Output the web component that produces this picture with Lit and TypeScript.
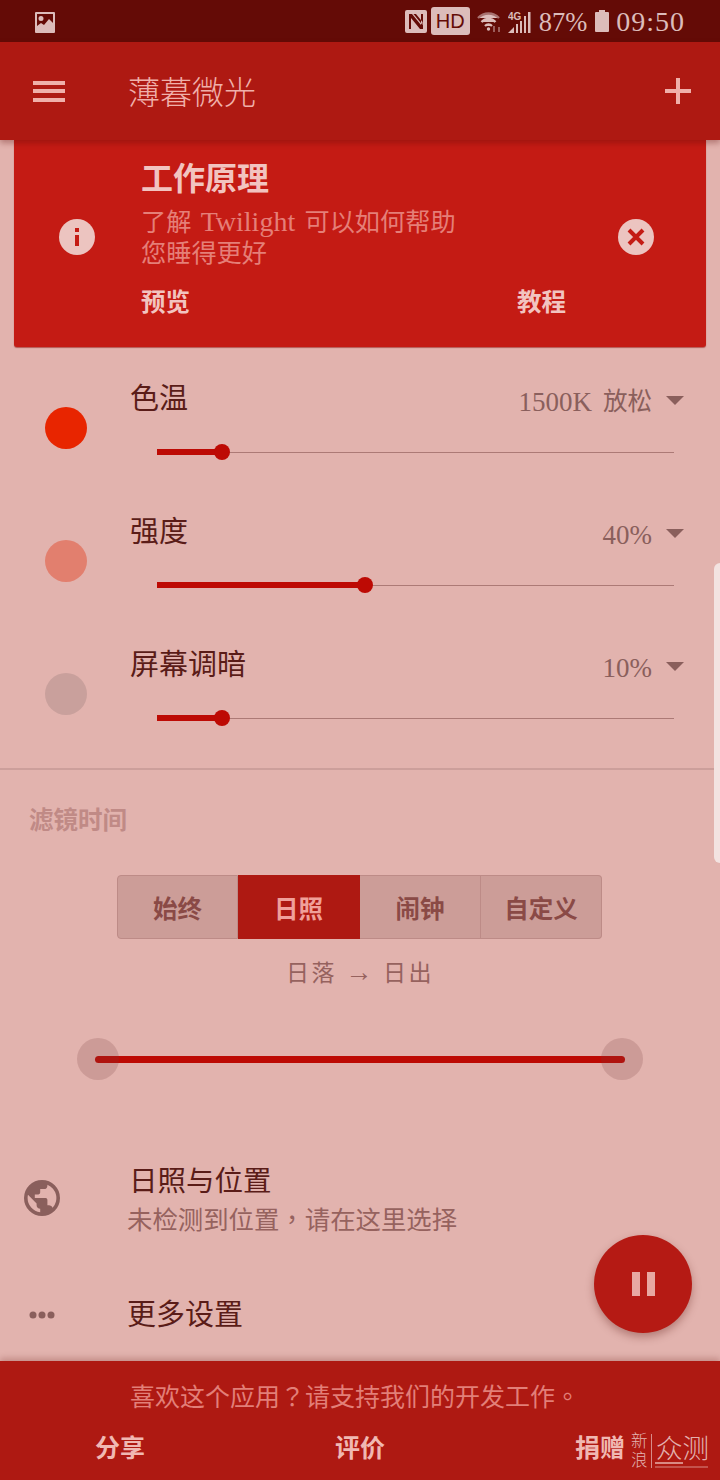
import { LitElement, css, html, svg } from 'lit';
import { customElement } from 'lit/decorators.js';

const sliders = [
  { label: '色温', value: '1500K', unit: '放松', dot: '#e82500', pct: 12.6 },
  { label: '强度', value: '40%', unit: '', dot: '#e27f6e', pct: 40.2 },
  { label: '屏幕调暗', value: '10%', unit: '', dot: '#c9a09c', pct: 12.6 },
];

const modes = ['始终', '日照', '闹钟', '自定义'];

// material "public" globe
const globe = svg`<path d="M12 2a10 10 0 1 0 0 20 10 10 0 0 0 0-20zm-1 17.930A8 8 0 0 1 4 12c0-.62.08-1.210.21-1.790L9 15v1c0 1.100.9 2 2 2v1.930zm6.900-2.540A2 2 0 0 0 16 16h-1v-3a1 1 0 0 0-1-1H8v-2h2a1 1 0 0 0 1-1V7h2a2 2 0 0 0 2-2v-.41a8 8 0 0 1 2.900 12.800z"/>`;

@customElement('app-root')
export class AppRoot extends LitElement {
  static styles = css`
    :host {
      display: flex;
      flex-direction: column;
      position: relative;
      width: 720px;
      height: 1480px;
      overflow: hidden;
      background: #e2b3ae;
      font-family: 'Liberation Serif', 'Noto Sans CJK SC', serif;
    }

    .status {
      height: 42px;
      flex-shrink: 0;
      display: flex;
      align-items: center;
      padding: 0 35px 0 34px;
      background: #640b06;
      color: #dcbcba;
    }
    .status .grow { flex: 1; }
    .status svg { display: block; fill: #dcbcba; }
    .pic { margin-top: 2px; }
    .hd {
      width: 39px;
      height: 28px;
      margin: 0 7px 0 4px;
      display: flex;
      align-items: center;
      justify-content: center;
      background: #dcbcba;
      border-radius: 3px;
      color: #640b06;
      font: 20px 'Liberation Sans', sans-serif;
    }
    .status .wifi { margin-right: 6px; margin-top: 1px; }
    .status .signal { margin-top: 1px; }
    .batt-text { font-size: 26.5px; margin: 2px 8px 0 8px; line-height: 40px; }
    .clock { font-size: 28px; margin: 2px 0 0 7px; letter-spacing: 1px; line-height: 40px; }

    .appbar {
      height: 98px;
      flex-shrink: 0;
      display: flex;
      align-items: center;
      padding: 0 29px 0 33px;
      background: #ae1912;
      box-shadow: 0 3px 6px rgba(90, 10, 5, 0.35);
      position: relative;
      z-index: 2;
    }
    .burger { width: 32px; height: 21px; display: flex; flex-direction: column; justify-content: space-between; }
    .burger i { display: block; height: 4px; background: #f0b0aa; }
    .appbar h1 {
      flex: 1;
      margin: -2px 0 0 63px;
      font-size: 32px;
      font-weight: 300;
      color: #f0b0aa;
    }

    .card {
      height: 207px;
      flex-shrink: 0;
      box-sizing: border-box;
      margin: 0 14px;
      padding: 20px 52px 0 45px;
      display: grid;
      grid-template-columns: 36px 1fr 36px;
      column-gap: 46px;
      background: #c41b14;
      border-radius: 0 0 3px 3px;
      box-shadow: 0 1px 1px rgba(150, 30, 25, 0.6);
    }
    .card .icon { align-self: start; margin-top: 59px; display: block; }
    .card h2 { margin: 0; font-size: 32px; line-height: 38px; font-weight: 700; color: #f2c4c0; }
    .card p { margin: 8px 0 0; font-size: 25.200px; line-height: 31px; color: #e57f78; white-space: nowrap; }
    .card p .latin { font-size: 28px; margin: 0 3px; }
    .card .actions {
      display: flex;
      justify-content: space-between;
      width: 425px;
      margin-top: 16px;
      font-size: 24.5px;
      line-height: 36px;
      font-weight: 700;
      color: #f2c4c0;
    }

    .sliders { padding-top: 20px; height: 423px; box-sizing: border-box; flex-shrink: 0; border-bottom: 2px solid #cc9f9b; }
    .row { height: 133px; display: grid; grid-template-columns: 130px 1fr; }
    .dot { width: 42px; height: 42px; border-radius: 50%; margin: 40px 0 0 45px; }
    .head {
      display: flex;
      justify-content: space-between;
      align-items: center;
      height: 60px;
      padding-right: 36px;
    }
    .head .label { margin-top: 3px; font-size: 29px; line-height: 40px; color: #5a1c18; }
    .head .val { display: flex; align-items: center; gap: 14px; margin-top: 9px; font-size: 27px; line-height: 36px; color: #8a5f5c; }
    .head .unit { font-size: 24.5px; margin-left: -3px; }
    .head .caret { width: 0; height: 0; margin-top: -3px; border-left: 9px solid transparent; border-right: 9px solid transparent; border-top: 9px solid #8a5f5c; }
    .track { display: flex; align-items: center; height: 20px; margin: 15px 46px 0 27px; }
    .track .on { height: 6px; background: #bd0a04; }
    .track .thumb { width: 16px; height: 16px; margin: 0 -4px 0 -8px; border-radius: 50%; background: #bd0a04; flex-shrink: 0; z-index: 1; }
    .track .off { flex: 1; height: 1px; background: #ac7a76; }

    .section { margin: 0; padding: 33px 0 0 29px; height: 70px; box-sizing: border-box; font-size: 24.5px; line-height: 36px; font-weight: 700; color: #c08a86; }

    .modes {
      display: grid;
      grid-template-columns: 121px 122px 121px 121px;
      width: 485px;
      height: 64px;
      margin: 35px 0 0 117px;
    }
    .mode {
      display: flex;
      align-items: center;
      justify-content: center;
      background: #cc9d98;
      border: 1px solid #bd8b87;
      border-left: 0;
      font-size: 24.5px;
      font-weight: 700;
      color: #8a4a46;
    }
    .mode:first-child { border-left: 1px solid #bd8b87; border-radius: 4px 0 0 4px; }
    .mode:last-child { border-radius: 0 4px 4px 0; }
    .mode.active { background: #ae1912; border-color: #ae1912; color: #f0a09a; }
    .range-label { margin-top: 17px; text-align: center; font-size: 23px; line-height: 36px; letter-spacing: 2.500px; color: #96625e; }
    .range-label .arrow { font-size: 27px; line-height: 0; }

    .range { position: relative; height: 42px; margin: 46px 77px 0 77px; display: flex; align-items: center; }
    .range .line { flex: 1; height: 7px; margin: 0 18px; border-radius: 4px; background: #bd0a04; }
    .range .knob { position: absolute; top: 0; width: 42px; height: 42px; border-radius: 50%; background: rgba(120, 60, 60, 0.2); }

    .list { flex: 1; position: relative; }
    .item { display: grid; grid-template-columns: 127px 1fr; align-items: center; }
    .item .ico { justify-self: start; margin-left: 24px; display: block; fill: #8a5f5c; }
    .item .title { font-size: 29px; line-height: 36px; color: #5a1c18; }
    .item .sub { margin-top: 2px; font-family: 'Liberation Serif', 'Noto Sans CJK TC', serif; font-size: 25.400px; line-height: 36px; color: #96625e; white-space: nowrap; }
    .loc { margin-top: 84px; }
    .loc .ico { align-self: start; margin-top: 16px; }
    .loc .title { padding-left: 2px; font-size: 28.5px; }
    .more { margin-top: 59px; height: 36px; }

    .bottom {
      height: 119px;
      flex-shrink: 0;
      box-sizing: border-box;
      padding-top: 17px;
      background: #ae1912;
      box-shadow: 0 -3px 6px rgba(90, 10, 5, 0.22);
      position: relative;
    }
    .bottom p { margin: 2px 0 0; padding-right: 10px; text-align: center; font-family: 'Liberation Serif', 'Noto Sans CJK TC', serif; font-size: 25px; line-height: 36px; color: #e27f78; }
    .bottom .links { display: grid; grid-template-columns: repeat(3, 240px); justify-items: center; margin-top: 15px; font-size: 25px; line-height: 36px; font-weight: 700; color: #f0b8b2; }

    .fab {
      position: absolute;
      left: 594px;
      top: 1235px;
      width: 98px;
      height: 98px;
      border-radius: 50%;
      background: #b51a14;
      box-shadow: 0 4px 8px rgba(90, 20, 15, 0.35);
      display: flex;
      align-items: center;
      justify-content: center;
      gap: 7px;
      z-index: 3;
    }
    .fab i { width: 8px; height: 24px; background: #e8a8a2; }

    .edge {
      position: absolute;
      left: 714px;
      top: 563px;
      width: 6px;
      height: 300px;
      border-radius: 6px 0 0 6px;
      background: #f3e3e1;
    }

    .mark { position: absolute; left: 631px; top: 1433px; height: 36px; display: flex; align-items: center; color: rgba(255, 255, 255, 0.68); }
    .mark .v { width: 18px; font-size: 16.500px; line-height: 19px; font-family: 'Liberation Sans', 'Noto Sans CJK SC', sans-serif; font-weight: 300; }
    .mark .sep { width: 1px; height: 34px; margin: 0 4px 0 2px; background: rgba(255, 255, 255, 0.5); }
    .mark .h { font-size: 26.5px; line-height: 28px; font-family: 'Noto Sans CJK SC', sans-serif; font-weight: 300; margin-top: -8px; }
    .stripes { position: absolute; left: 24px; bottom: 1px; width: 53px; height: 6px; }
  `;

  render() {
    return html`
      <div class="status">
        <svg class="pic" width="22" height="21" viewBox="0 0 22 21">
          <path fill-rule="evenodd" d="M2 0h18a1 1 0 0 1 1 1v19a1 1 0 0 1-1 1H2a1 1 0 0 1-1-1V1a1 1 0 0 1 1-1zM3 2v12l4-3 3 2 5-6 4 4V2zM7 4a2.500 2.500 0 1 1 0 5 2.500 2.500 0 0 1 0-5z"/>
        </svg>
        <span class="grow"></span>
        <svg width="22" height="23" viewBox="0 0 22 23">
          <path fill-rule="evenodd" d="M2 0h18a2 2 0 0 1 2 2v19a2 2 0 0 1-2 2H2a2 2 0 0 1-2-2V2a2 2 0 0 1 2-2zM4 4v15h2V8l9 11h3V4h-2v11L7 4zM8.500 4l9 11V12L11 4z"/>
        </svg>
        <span class="hd">HD</span>
        <svg class="wifi" width="25" height="21" viewBox="0 0 25 21" fill="none" stroke-width="2.400">
          <path d="M1 7c6-6 15-6 21 0" stroke="#a87270"/>
          <path d="M4.500 11c4-4 10-4 14 0" stroke="#dcbcba"/>
          <path d="M8 15c2-2 5-2 7 0" stroke="#dcbcba"/>
          <circle cx="11.500" cy="18" r="1.700" fill="#dcbcba" stroke="none"/>
          <path d="M17 21v-6m5 6v-5" stroke="#a87270" stroke-width="1.600"/>
        </svg>
        <svg class="signal" width="23" height="23" viewBox="0 0 23 23">
          <text x="0" y="9.500" font-family="Liberation Sans, sans-serif" font-size="10" font-weight="700">4G</text>
          <path d="M0 23l6-6v6zM8 14h2v9H8zM12 11h2v12h-2zM16 6h2v17h-2zM20 2h2.500v21H20z"/>
        </svg>
        <span class="batt-text">87%</span>
        <svg width="14" height="22" viewBox="0 0 14 22"><path d="M4 0h6v2h3a1 1 0 0 1 1 1v18a1 1 0 0 1-1 1H1a1 1 0 0 1-1-1V3a1 1 0 0 1 1-1h3z"/></svg>
        <span class="clock">09:50</span>
      </div>

      <header class="appbar">
        <div class="burger"><i></i><i></i><i></i></div>
        <h1>薄暮微光</h1>
        <svg width="26" height="26" viewBox="0 0 26 26" fill="#f0b0aa"><path d="M11 0h4v11h11v4H15v11h-4V15H0v-4h11z"/></svg>
      </header>

      <section class="card">
        <svg class="icon" width="36" height="36" viewBox="0 0 36 36">
          <circle cx="18" cy="18" r="18" fill="#ecc4c0"/>
          <rect x="16" y="16" width="4" height="11" fill="#c41b14"/>
          <rect x="16" y="9" width="4" height="4" fill="#c41b14"/>
        </svg>
        <div>
          <h2>工作原理</h2>
          <p>了解 <span class="latin">Twilight</span> 可以如何帮助<br />您睡得更好</p>
          <div class="actions"><span>预览</span><span>教程</span></div>
        </div>
        <svg class="icon" width="36" height="36" viewBox="0 0 36 36">
          <circle cx="18" cy="18" r="18" fill="#ecc4c0"/>
          <path d="M11 11l14 14M25 11L11 25" stroke="#c41b14" stroke-width="4" fill="none"/>
        </svg>
      </section>

      <section class="sliders">
        ${sliders.map(
          (s) => html`
            <div class="row">
              <div class="dot" style="background:${s.dot}"></div>
              <div>
                <div class="head">
                  <span class="label">${s.label}</span>
                  <span class="val">
                    <span>${s.value}</span>
                    ${s.unit ? html`<span class="unit">${s.unit}</span>` : ''}
                    <i class="caret"></i>
                  </span>
                </div>
                <div class="track">
                  <div class="on" style="width:${s.pct}%"></div>
                  <div class="thumb"></div>
                  <div class="off"></div>
                </div>
              </div>
            </div>
          `,
        )}
      </section>

      <h3 class="section">滤镜时间</h3>

      <div class="modes">
        ${modes.map((m) => html`<div class="mode ${m === '日照' ? 'active' : ''}">${m}</div>`)}
      </div>
      <div class="range-label">日落 <span class="arrow">→</span> 日出</div>

      <div class="range">
        <div class="line"></div>
        <div class="knob" style="left:0"></div>
        <div class="knob" style="right:0"></div>
      </div>

      <div class="list">
        <div class="item loc">
          <svg class="ico" width="36" height="36" viewBox="2 2 20 20">${globe}</svg>
          <div>
            <div class="title">日照与位置</div>
            <div class="sub">未检测到位置，请在这里选择</div>
          </div>
        </div>
        <div class="item more">
          <svg class="ico" width="36" height="12" viewBox="0 0 36 12">
            <circle cx="9" cy="6" r="3.500"/><circle cx="18" cy="6" r="3.500"/><circle cx="27" cy="6" r="3.500"/>
          </svg>
          <div class="title">更多设置</div>
        </div>
      </div>

      <footer class="bottom">
        <p>喜欢这个应用？请支持我们的开发工作。</p>
        <div class="links"><span>分享</span><span>评价</span><span>捐赠</span></div>
      </footer>

      <div class="fab"><i></i><i></i></div>
      <div class="edge"></div>
      <div class="mark">
        <div class="v">新<br />浪</div>
        <div class="sep"></div>
        <div class="h">众测</div>
        <svg class="stripes" viewBox="0 0 53 6"><rect width="28" height="2" fill="#d98a84"/><rect y="4" width="53" height="2" fill="#c4524c"/></svg>
      </div>
    `;
  }
}
